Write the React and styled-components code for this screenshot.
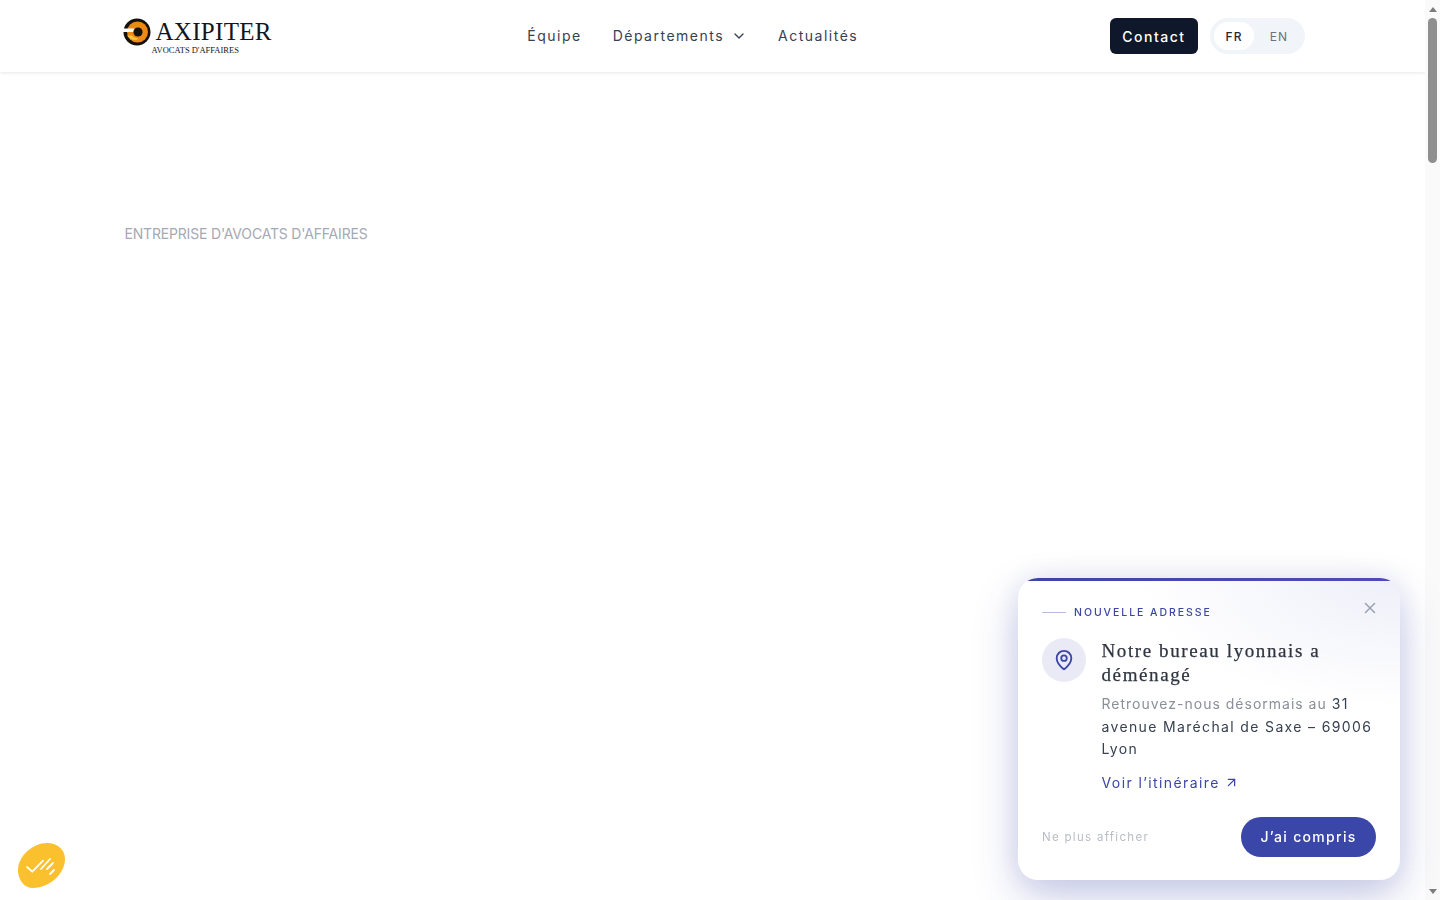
import styled, { createGlobalStyle } from "styled-components";
import { useState } from "react";
import { ChevronDown, MapPin, X, ArrowUpRight } from "lucide-react";

const GlobalStyle = createGlobalStyle`
  body {
    margin: 0;
    background: #fff;
    color: #1f2937;
    font-family: Inter, "Liberation Sans", sans-serif;
  }
  * {
    box-sizing: border-box;
  }
`;

const Shell = styled.div`
  height: 100vh;
  display: flex;
  overflow: hidden;
`;

const Page = styled.div`
  flex: 1;
  min-width: 0;
`;

const Rail = styled.div`
  width: 15px;
  flex: none;
  display: flex;
  flex-direction: column;
  align-items: center;
  background: #fafafa;
`;

const RailArrow = styled.div`
  height: 18px;
  flex: none;
  display: flex;
  align-items: center;
  justify-content: center;

  &::before {
    content: "";
    border-left: 4px solid transparent;
    border-right: 4px solid transparent;
    ${(p) => (p.$down ? "border-top" : "border-bottom")}: 5px solid #7d7d7d;
  }
`;

const RailTrack = styled.div`
  flex: 1;
  width: 100%;
  display: flex;
  justify-content: center;
`;

const RailThumb = styled.div`
  width: 9px;
  height: 145px;
  border-radius: 5px;
  background: #8f8f8f;
`;

const Header = styled.header`
  height: 72px;
  background: #fff;
  box-shadow: 0 1px 3px rgba(15, 23, 42, 0.1);
`;

const HeaderInner = styled.div`
  max-width: 1280px;
  height: 100%;
  margin: 0 auto;
  padding: 0 47.5px 0 48px;
  display: flex;
  align-items: center;
  justify-content: space-between;
`;

const Logo = styled.a`
  width: 155px;
  display: flex;
  align-items: flex-start;
  gap: 5px;
  padding-left: 2px;
  color: #14161c;
`;

const LogoWords = styled.div`
  margin-top: 2px;
  display: flex;
  flex-direction: column;
  font-family: "Liberation Serif", serif;
`;

const LogoName = styled.span`
  font-size: 25px;
  line-height: 24px;
  letter-spacing: 0.3px;
  white-space: nowrap;
`;

const LogoSub = styled.span`
  margin: 1px 0 0 -4px;
  font-size: 8.5px;
  line-height: 10px;
  letter-spacing: 0;
  white-space: nowrap;
`;

const Nav = styled.nav`
  display: flex;
  align-items: center;
  gap: 31px;
`;

const NavLink = styled.a`
  display: flex;
  align-items: center;
  gap: 7px;
  font-size: 14px;
  line-height: 20px;
  letter-spacing: 1.5px;
  color: #374151;
  white-space: nowrap;
`;

const HeaderRight = styled.div`
  display: flex;
  align-items: center;
  gap: 12px;
`;

const ContactButton = styled.button`
  width: 88px;
  height: 36px;
  border: none;
  border-radius: 6px;
  background: #0f172a;
  color: #fff;
  font: 500 14px Inter, "Liberation Sans", sans-serif;
  letter-spacing: 1.5px;
`;

const LangSwitch = styled.div`
  width: 95px;
  height: 36px;
  padding: 4px 0 4px 4px;
  display: flex;
  border-radius: 18px;
  background: #f1f5f9;
`;

const LangOption = styled.span`
  width: ${(p) => (p.$active ? "40px" : "50px")};
  display: flex;
  align-items: center;
  justify-content: center;
  border-radius: 14px;
  background: ${(p) => (p.$active ? "#fff" : "transparent")};
  color: ${(p) => (p.$active ? "#1f2937" : "#6b7280")};
  font-size: 12px;
  font-weight: ${(p) => (p.$active ? 500 : 400)};
  letter-spacing: 1.1px;
`;

const Main = styled.main`
  max-width: 1280px;
  margin: 0 auto;
  padding: 153px 48px 0 52px;
`;

const Eyebrow = styled.p`
  margin: 0;
  font-size: 14px;
  line-height: 18px;
  letter-spacing: -0.18px;
  color: #a5a9b2;
`;

const Card = styled.aside`
  position: fixed;
  right: 40px;
  bottom: 20px;
  width: 382px;
  height: 302px;
  padding: 24px;
  overflow: hidden;
  border-radius: 20px;
  background: radial-gradient(260px 130px at 100% 0, #eeeff9 0%, rgba(238, 239, 249, 0) 100%), #fff;
  box-shadow: 0 18px 44px rgba(58, 70, 168, 0.26), 0 0 30px rgba(58, 70, 168, 0.1);

  &::before {
    content: "";
    position: absolute;
    top: 0;
    left: 0;
    right: 0;
    height: 3px;
    background: linear-gradient(90deg, #3b46a6, #5249b8);
  }
`;

const CloseButton = styled.button`
  position: absolute;
  top: 21px;
  right: 21px;
  padding: 0;
  display: flex;
  border: none;
  background: none;
  color: #9aa1b1;
`;

const Tag = styled.div`
  height: 20px;
  display: flex;
  align-items: center;
  gap: 8px;
  font-size: 10.5px;
  font-weight: 500;
  letter-spacing: 1.95px;
  color: #3c46a6;

  &::before {
    content: "";
    width: 24px;
    height: 1px;
    background: #b9bcdc;
  }
`;

const Row = styled.div`
  margin-top: 16px;
  display: flex;
  gap: 15.5px;
`;

const IconCircle = styled.div`
  width: 44px;
  height: 44px;
  flex: none;
  display: flex;
  align-items: center;
  justify-content: center;
  border-radius: 50%;
  background: #e9eaf6;
  color: #3c46a6;
`;

const Title = styled.h3`
  margin: 0;
  padding-top: 1px;
  font-family: "Liberation Serif", serif;
  font-size: 19px;
  font-weight: 400;
  line-height: 24px;
  letter-spacing: 1.6px;
  color: #2f3440;
  -webkit-text-stroke: 0.25px #2f3440;
`;

const Body = styled.p`
  margin: 6px 0 0;
  font-size: 14px;
  line-height: 22.5px;
  letter-spacing: 1px;
  color: #8b8f99;

  strong {
    font-weight: 400;
    letter-spacing: 1.35px;
    color: #374151;
  }
`;

const RouteLink = styled.a`
  margin-top: 11px;
  display: flex;
  align-items: center;
  gap: 4px;
  font-size: 14px;
  line-height: 22px;
  letter-spacing: 1.4px;
  color: #3c46a6;
`;

const Footer = styled.div`
  margin-top: 23px;
  display: flex;
  align-items: center;
  justify-content: space-between;
`;

const Dismiss = styled.button`
  padding: 0;
  border: none;
  background: none;
  color: #b9bcc6;
  font: 400 11.5px Inter, "Liberation Sans", sans-serif;
  letter-spacing: 1.3px;
`;

const AckButton = styled.button`
  width: 135px;
  height: 40px;
  border: none;
  border-radius: 20px;
  background: #3a46a8;
  color: #fff;
  font: 500 14px Inter, "Liberation Sans", sans-serif;
  letter-spacing: 1.3px;
`;

const CookieBadge = styled.button`
  position: fixed;
  left: 18px;
  bottom: 12px;
  padding: 0;
  display: flex;
  border: none;
  background: none;
`;

function LogoMark() {
  return (
    <svg width="28" height="28" viewBox="0 0 28 28">
      <circle cx="14" cy="14" r="13.5" fill="#14110f" />
      <circle cx="14.5" cy="14" r="10.5" fill="#ee8a14" />
      <path d="M0 10.5h9.5a5 5 0 0 1 5 3.5H0z" fill="#fff" />
      <path d="M0 17.5h9a6 6 0 0 0 5.5 2.5v1.500A9 9 0 0 1 4 17.5z" fill="#f9c33a" />
      <circle cx="15" cy="14" r="4.6" fill="#14110f" />
    </svg>
  );
}

function CookieIcon() {
  return (
    <svg width="47" height="45" viewBox="0 0 47 45">
      <path
        d="M29 0C40 0 47 7 47 16C47 31 31 45 15 45C6 45 0 37 0 27C0 13 15 0 29 0Z"
        fill="#fbc02d"
      />
      <path
        d="M9 24l5.300 4.700L25 17.700M23 26l9-10M29 26l6-6M32 31l4-4"
        fill="none"
        stroke="#fff"
        strokeWidth="1.800"
        strokeLinecap="round"
        strokeLinejoin="round"
      />
    </svg>
  );
}

function App() {
  const [open, setOpen] = useState(true);

  return (
    <Shell>
      <GlobalStyle />
      <Page>
        <Header>
          <HeaderInner>
            <Logo>
              <LogoMark />
              <LogoWords>
                <LogoName>AXIPITER</LogoName>
                <LogoSub>AVOCATS D'AFFAIRES</LogoSub>
              </LogoWords>
            </Logo>
            <Nav>
              <NavLink>Équipe</NavLink>
              <NavLink>
                Départements
                <ChevronDown size={16} />
              </NavLink>
              <NavLink>Actualités</NavLink>
            </Nav>
            <HeaderRight>
              <ContactButton>Contact</ContactButton>
              <LangSwitch>
                <LangOption $active>FR</LangOption>
                <LangOption>EN</LangOption>
              </LangSwitch>
            </HeaderRight>
          </HeaderInner>
        </Header>

        <Main>
          <Eyebrow>ENTREPRISE D'AVOCATS D'AFFAIRES</Eyebrow>
        </Main>
      </Page>

      <Rail>
        <RailArrow />
        <RailTrack>
          <RailThumb />
        </RailTrack>
        <RailArrow $down />
      </Rail>

      {open && (
        <Card>
          <CloseButton onClick={() => setOpen(false)}>
            <X size={18} />
          </CloseButton>
          <Tag>NOUVELLE ADRESSE</Tag>
          <Row>
            <IconCircle>
              <MapPin size={22} />
            </IconCircle>
            <div>
              <Title>Notre bureau lyonnais a déménagé</Title>
              <Body>
                Retrouvez-nous désormais au <strong>31 avenue Maréchal de Saxe – 69006 Lyon</strong>
              </Body>
              <RouteLink>
                Voir l’itinéraire
                <ArrowUpRight size={15} />
              </RouteLink>
            </div>
          </Row>
          <Footer>
            <Dismiss>Ne plus afficher</Dismiss>
            <AckButton onClick={() => setOpen(false)}>J’ai compris</AckButton>
          </Footer>
        </Card>
      )}

      <CookieBadge>
        <CookieIcon />
      </CookieBadge>
    </Shell>
  );
}

export default App;
